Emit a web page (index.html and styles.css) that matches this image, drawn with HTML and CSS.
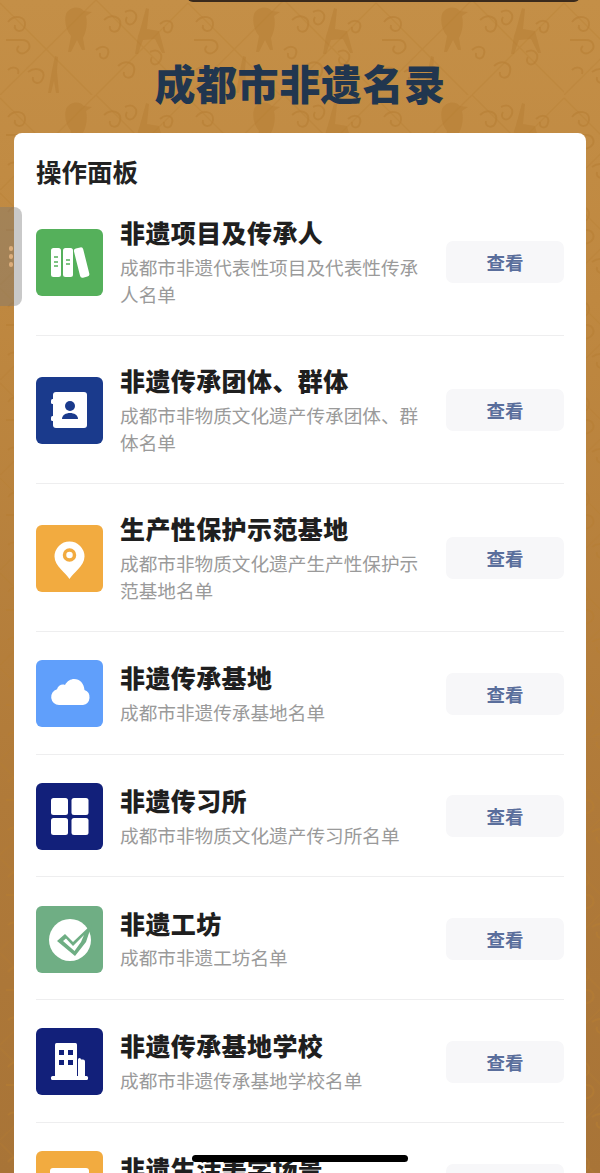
FILE: index.html
```html
<!DOCTYPE html>
<html lang="zh">
<head>
<meta charset="utf-8">
<title>成都市非遗名录</title>
<link rel="stylesheet" href="styles.css">
</head>
<body>
<div class="page">
  <svg class="texture" width="600" height="1173" aria-hidden="true">
    <defs>
      <pattern id="motif" width="188" height="95" patternUnits="userSpaceOnUse">
        <g fill="none" stroke="#b67d33" stroke-width="1.500" opacity=".3">
          <path d="M96 95 188 3M0 95 96 0M96 0 188 92M0 3 92 95"/>
        </g>
        <g fill="none" stroke="#b67d33" stroke-width="2" opacity=".55">
          <path d="M8 22c6-8 18-6 17 3s-12 7-10 0M6 40h16c8 0 10 8 4 12s-12-2-7-6"/>
          <path d="M28 72c8-6 18-2 15 6s-12 5-10-1M8 70c5-5 12-2 10 4"/>
          <path d="M104 20c8-7 18-3 16 6s-12 6-10 0M125 12c8-4 14 2 10 9s-12 2-8-4"/>
          <path d="M118 66c8-7 18-3 16 6s-12 6-10 0M150 52c8-4 14 2 10 9s-12 2-8-4"/>
          <path d="M160 24c6-6 14-3 12 4s-9 5-8-1M96 50c6-6 14-3 12 4s-9 5-8-1"/>
        </g>
        <g fill="#b67d33" opacity=".5">
          <path d="M66 14c3-7 13-9 18-3l8 1-6 4c2 8 0 16-3 22l2 12h-3l-5-10-6 12h-3l3-16c-5-6-7-14-5-22z"/>
          <path d="M140 30l6-22 3 1-2 20 12 2 6 22h-3l-7-14-12 1-5 14h-3l3-18z"/>
          <path d="M52 70l3-14 3 1-1 14 2 22h-3l-2-12-3 12h-3z"/>
        </g>
      </pattern>
    </defs>
    <rect width="600" height="1173" fill="url(#motif)"/>
  </svg>
  <div class="notch"></div>
  <h1 class="title">成都市非遗名录</h1>
  <main class="panel">
    <h2 class="panel-title">操作面板</h2>
    <ul class="list">
      <li class="row">
        <span class="icon green">
          <svg viewBox="0 0 67 67" width="67" height="67"><g fill="#fff"><rect x="15" y="19" width="10" height="29" rx="2.500"/><rect x="27" y="19" width="10" height="29" rx="2.500"/><rect x="41" y="18.500" width="9.500" height="30" rx="2.500" transform="rotate(-14 46 34)"/></g><path d="M18 28h4M18 33h4M18 37h4M30 31h4M30 35h4" stroke="#55b05b" stroke-width="1.500"/></svg>
        </span>
        <div class="text"><h3>非遗项目及传承人</h3><p>成都市非遗代表性项目及代表性传承人名单</p></div>
        <span class="btn">查看</span>
      </li>
      <li class="row">
        <span class="icon blue">
          <svg viewBox="0 0 67 67" width="67" height="67"><rect x="17" y="15" width="34" height="36" rx="3" fill="#fff"/><rect x="15" y="22" width="4" height="5" rx="1.500" fill="#fff"/><rect x="15" y="39" width="4" height="5" rx="1.500" fill="#fff"/><circle cx="34" cy="29" r="5" fill="#1a3a8c"/><path d="M26 42c0-4 4-6 8-6s8 2 8 6z" fill="#1a3a8c"/></svg>
        </span>
        <div class="text"><h3>非遗传承团体、群体</h3><p>成都市非物质文化遗产传承团体、群体名单</p></div>
        <span class="btn">查看</span>
      </li>
      <li class="row">
        <span class="icon orange">
          <svg viewBox="0 0 67 67" width="67" height="67"><path d="M33.500 54C30 48 18.500 41 18.500 31.500a15 15 0 0 1 30 0C48.500 41 37 48 33.500 54z" fill="#fff"/><circle cx="33.500" cy="30" r="5" fill="none" stroke="#f2ab40" stroke-width="3.500"/></svg>
        </span>
        <div class="text"><h3>生产性保护示范基地</h3><p>成都市非物质文化遗产生产性保护示范基地名单</p></div>
        <span class="btn">查看</span>
      </li>
      <li class="row">
        <span class="icon sky">
          <svg viewBox="0 0 67 67" width="67" height="67"><path d="M23 45a8 8 0 0 1-2-15.700c1-4 5-5.500 8-4.300C31 21 35 19 38 19c6 0 10 4.500 10.500 11A7.800 7.800 0 0 1 47 45z" fill="#fff"/></svg>
        </span>
        <div class="text"><h3>非遗传承基地</h3><p>成都市非遗传承基地名单</p></div>
        <span class="btn">查看</span>
      </li>
      <li class="row">
        <span class="icon navy">
          <svg viewBox="0 0 67 67" width="67" height="67"><g fill="#fff"><rect x="15" y="15" width="17" height="17" rx="2.500"/><rect x="35.500" y="15" width="17" height="17" rx="2.500"/><rect x="15" y="35" width="17" height="17" rx="2.500"/><rect x="35.500" y="35" width="17" height="17" rx="2.500"/></g></svg>
        </span>
        <div class="text"><h3>非遗传习所</h3><p>成都市非物质文化遗产传习所名单</p></div>
        <span class="btn">查看</span>
      </li>
      <li class="row">
        <span class="icon sage">
          <svg viewBox="0 0 67 67" width="67" height="67"><circle cx="34" cy="34" r="21" fill="#fff"/><path d="M21 35 29 28 37 36 56 18 50 36 39 50z" fill="#6fae84"/><path d="M27 35 30 32.500 37 40 48 29 45 36 38.500 45z" fill="#fff"/></svg>
        </span>
        <div class="text"><h3>非遗工坊</h3><p>成都市非遗工坊名单</p></div>
        <span class="btn">查看</span>
      </li>
      <li class="row">
        <span class="icon navy">
          <svg viewBox="0 0 67 67" width="67" height="67"><g fill="#fff"><path d="M19 16.500a1.500 1.500 0 0 1 1.500-1.500h19a1.500 1.500 0 0 1 1.500 1.500V49H19z"/><path d="M42 31.500a1.500 1.500 0 0 1 3 0h2a2 2 0 0 1 2 2V49h-7z"/><rect x="15" y="48" width="37" height="4" rx="1.500"/></g><g fill="#12207a"><rect x="23" y="22" width="5" height="5"/><rect x="32" y="22" width="5" height="5"/><rect x="23" y="32" width="5" height="5"/><rect x="32" y="32" width="5" height="5"/></g></svg>
        </span>
        <div class="text"><h3>非遗传承基地学校</h3><p>成都市非遗传承基地学校名单</p></div>
        <span class="btn">查看</span>
      </li>
      <li class="row">
        <span class="icon orange">
          <svg viewBox="0 0 67 67" width="67" height="67"><rect x="14" y="17" width="39" height="32" rx="3" fill="#fff"/></svg>
        </span>
        <div class="text"><h3>非遗生活美学场景</h3><p>成都市非遗生活美学场景名单</p></div>
        <span class="btn">查看</span>
      </li>
    </ul>
  </main>
  <div class="handle"><i></i><i></i><i></i></div>
  <div class="home"></div>
</div>
</body>
</html>
```
FILE: styles.css
```css
* { box-sizing: border-box; margin: 0; padding: 0; }
html, body { width: 600px; height: 1173px; overflow: hidden; }
body { font-family: "Noto Sans CJK SC", "Noto Sans", sans-serif; }
.page {
  position: relative;
  width: 600px;
  height: 1173px;
  overflow: hidden;
  background: linear-gradient(180deg, #c48f47 0, #bf8840 300px, #b07a39 800px, #a87437 1173px);
  padding: 0 14px;
}
.texture { position: absolute; left: 0; top: 0; filter: blur(.7px); }
.notch {
  position: absolute;
  left: 187px;
  top: -6px;
  width: 393px;
  height: 8px;
  background: #3a2a1c;
  border-radius: 0 0 6px 6px;
}
.title {
  position: relative;
  padding-top: 55px;
  height: 133px;
  text-align: center;
  font-size: 41px;
  line-height: 54px;
  font-weight: 900;
  letter-spacing: .6px;
  color: #21364f;
}
.panel {
  position: relative;
  background: #fff;
  border-radius: 8px 8px 0 0;
  padding: 0 22px;
  height: 1100px;
}
.panel-title {
  display: flex;
  align-items: center;
  height: 55px;
  padding-top: 20px;
  font-size: 25.500px;
  line-height: 35px;
  font-weight: 700;
  color: #222;
}
.list { list-style: none; }
.row {
  display: flex;
  align-items: center;
  padding: 28.300px 0 26.400px;
  border-bottom: 1px solid #eeeeef;
}
.icon {
  flex: none;
  width: 67px;
  height: 67px;
  border-radius: 6px;
  display: flex;
}
.green { background: #55b05b; }
.blue { background: #1a3a8c; }
.orange { background: #f2ab40; }
.sky { background: #609ffb; }
.navy { background: #12207a; }
.sage { background: #6fae84; }
.text { flex: 1; min-width: 0; padding: 0 20px 0 17px; }
.text h3 {
  font-size: 25px;
  line-height: 33.600px;
  font-weight: 900;
  letter-spacing: .4px;
  color: #1f1f1f;
}
.text p {
  font-size: 18.650px;
  line-height: 27.200px;
  color: #9a9a9a;
  margin: 3.300px 0 1px;
}
.btn {
  flex: none;
  width: 118px;
  height: 42px;
  background: #f7f7f9;
  border-radius: 7px;
  text-align: center;
  font-size: 18.500px;
  line-height: 42px;
  font-weight: 700;
  color: #5a6e9c;
}
.handle {
  position: absolute;
  left: 0;
  top: 207px;
  width: 22px;
  height: 99px;
  background: rgba(120, 120, 120, .4);
  border-radius: 0 8px 8px 0;
  display: flex;
  flex-direction: column;
  align-items: center;
  justify-content: center;
  gap: 3.500px;
}
.handle i { width: 4.500px; height: 4.500px; border-radius: 50%; background: #dcae7c; }
.home {
  position: absolute;
  left: 192px;
  top: 1155px;
  width: 216px;
  height: 7px;
  border-radius: 4px;
  background: #000;
}
```
